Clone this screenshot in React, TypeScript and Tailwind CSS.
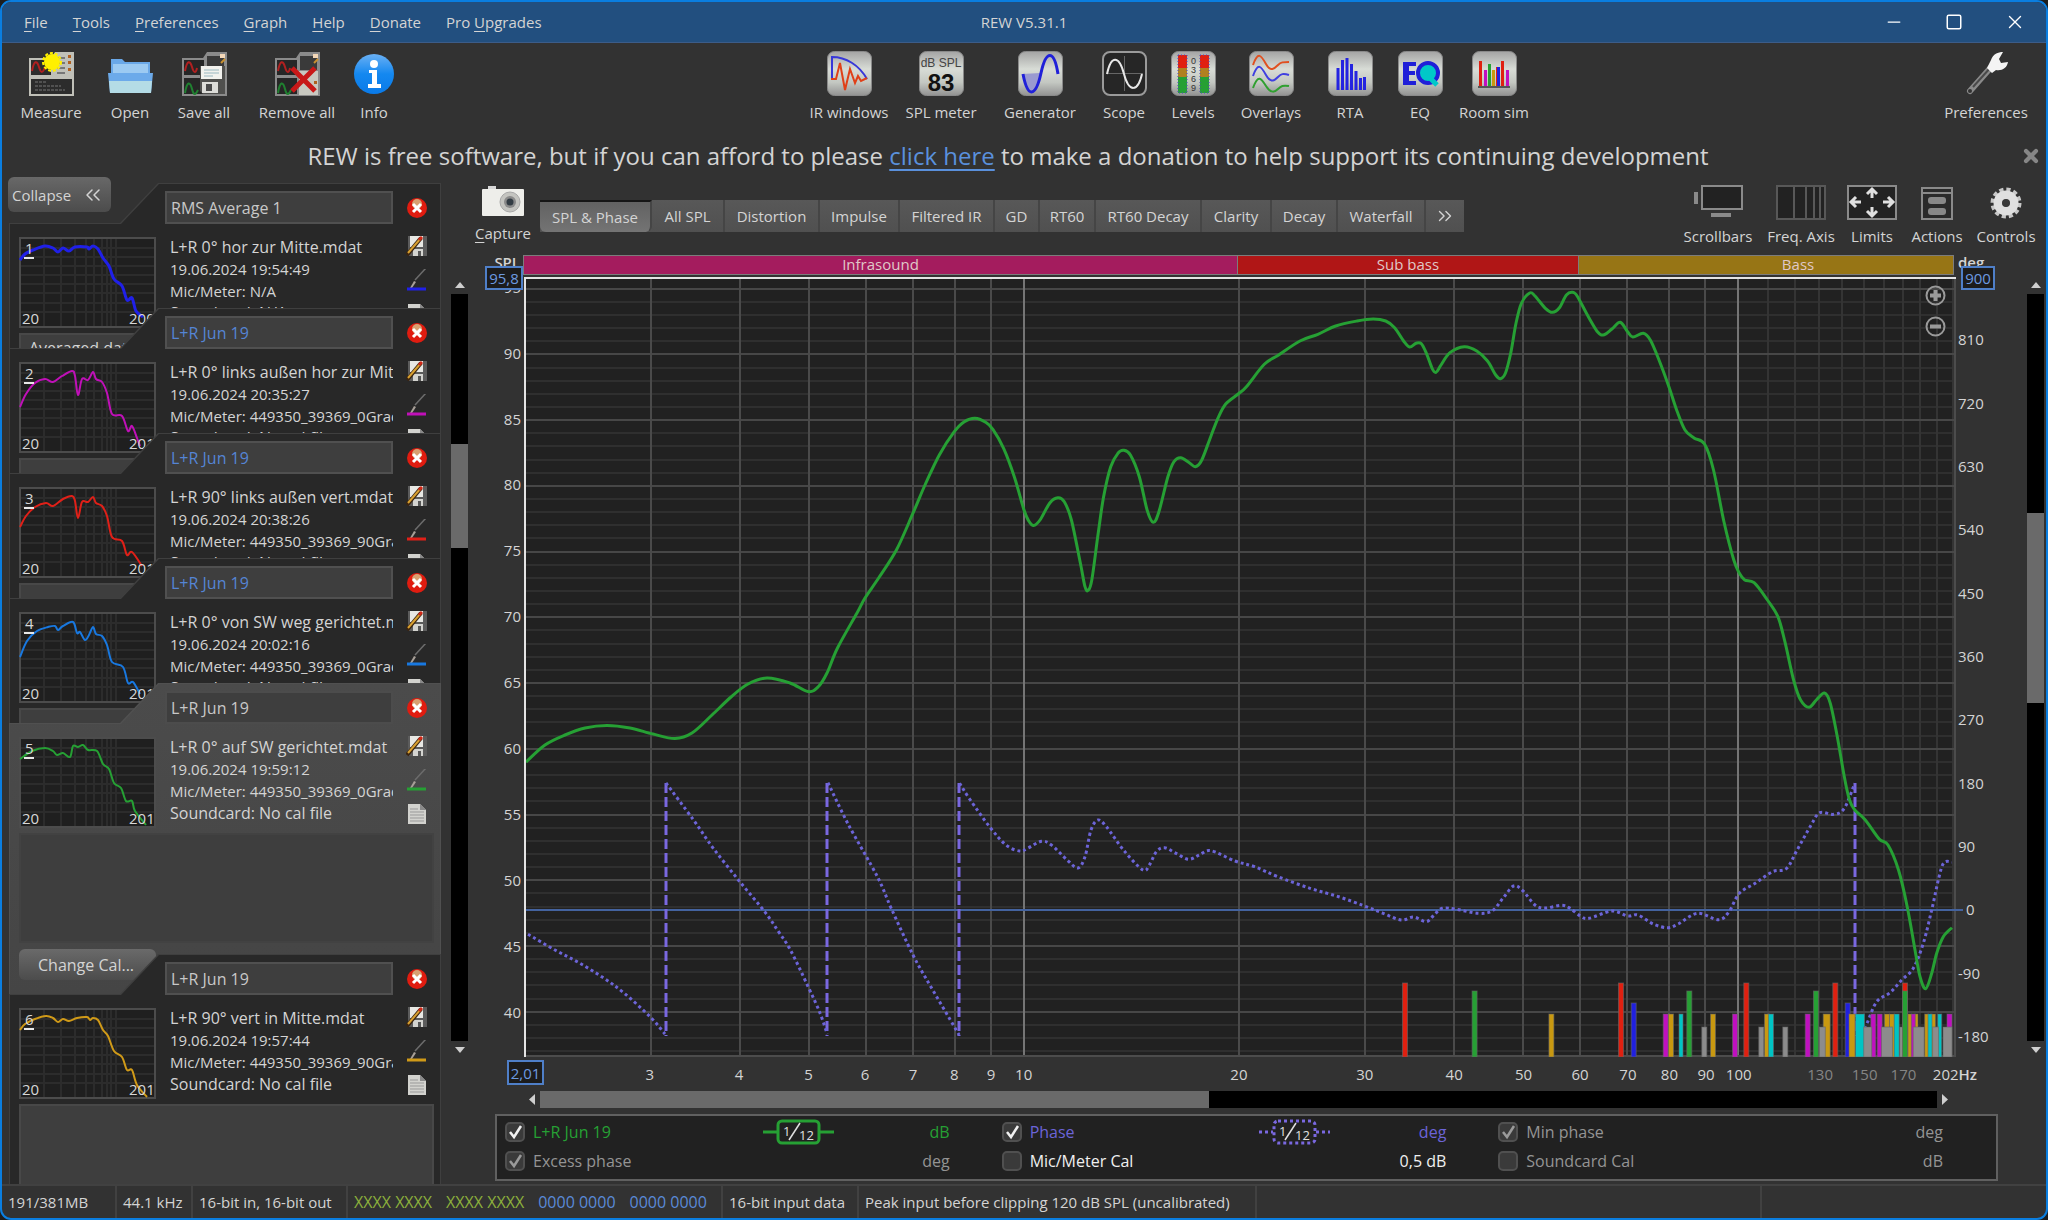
import type { ReactNode } from "react";
import { ChevronsLeft, ChevronsRight, Minus, Square, X } from "lucide-react";

type Point = [number, number];

/* ---------- curve helpers ---------- */

function smoothPath(points: Point[]) {
  let d = `M${points[0][0]} ${points[0][1]}`;
  for (let i = 0; i < points.length - 1; i++) {
    const p0 = points[Math.max(0, i - 1)];
    const p1 = points[i];
    const p2 = points[i + 1];
    const p3 = points[Math.min(points.length - 1, i + 2)];
    const c1 = [p1[0] + (p2[0] - p0[0]) / 6, p1[1] + (p2[1] - p0[1]) / 6];
    const c2 = [p2[0] - (p3[0] - p1[0]) / 6, p2[1] - (p3[1] - p1[1]) / 6];
    d += `C${c1[0].toFixed(1)} ${c1[1].toFixed(1)} ${c2[0].toFixed(1)} ${c2[1].toFixed(1)} ${p2[0]} ${p2[1]}`;
  }
  return d;
}

// Turns "x,y x,y ..." into points.
function parsePoints(text: string): Point[] {
  return text
    .trim()
    .split(/\s+/)
    .map((pair) => pair.split(",").map(Number) as Point);
}

/* ---------- plot geometry ---------- */

const PLOT = { left: 526, top: 279, width: 1430, height: 778 };
const BOTTOM = PLOT.top + PLOT.height;

const freqX = (hz: number) => 1024 + 714 * Math.log10(hz / 10);
const splY = (db: number) => 288.7 + (95 - db) * 13.145;
const degY = (deg: number) => 909.7 - deg * 0.702;
const pctX = (x: number) => `${((x - PLOT.left) / PLOT.width) * 100}%`;
const pctY = (y: number) => `${((y - PLOT.top) / PLOT.height) * 100}%`;

const splCurve = parsePoints(`
  526,762 545,745 565,735 585,728 607,725.5 630,728 653,734 675,738.5 692,733 712,715 731,697 748,684 767,678 790,683 808,691.5 818,687
  827,673 837.5,648 857,613 865,598 878.6,578 896.4,550 913.2,512.7 925,485 939.3,455 954.3,431.7 964.3,421.7
  975,418.3 985.7,422.3 992.9,429.3 1003.6,448.3 1014.3,476.7 1024,510 1028.6,520.7 1033.6,525.5 1040,520 1050,502.7
  1057.9,497.7 1064.3,501.7 1071.4,520 1080.4,563.3 1085,586.7 1088.2,590.3 1091.8,580 1098.2,533.3 1103.6,496.7
  1110.7,466.7 1117.9,453.3 1123.6,450.3 1130.4,455 1139.3,476.7 1147.1,510 1153.2,522.3 1158.9,511.7 1167.9,476.7
  1173.9,461.7 1180.7,457.7 1189.3,462.7 1195.4,466.7 1201.8,460 1210.7,436.7 1217.9,418.3 1225.7,404 1238.2,394
  1246.4,386.7 1264.3,364.3 1278.6,355 1300,341 1317.9,334.3 1335.7,326 1357.1,321 1373.2,319 1385.7,321
  1394.6,327.7 1403.6,341 1409.6,347 1416,343.3 1421.4,343.7 1426.8,354.3 1432.1,368.3 1436,372.3 1441,365
  1450,352.7 1464.3,346.7 1476.8,351 1487.5,361 1495.7,375 1500.4,378.7 1505.4,373.3 1510.7,353.3 1516,323.3
  1521.4,303.3 1529.7,293 1535,296 1545.4,308.3 1552.4,312.3 1559.4,307.7 1566.4,295 1572.7,292.3 1577.6,296.7
  1587.4,315 1597.9,332.3 1604.2,334.7 1611.9,329 1620.2,322.3 1627.6,331.7 1632.8,337 1643.3,333.3 1650.3,340
  1659,360 1669,387 1677,411 1685,430 1694,438 1704.5,444 1713.5,470 1724,522 1733.8,560 1739.4,573.3 1744.7,580
  1754.1,582.7 1767.4,600 1777.9,616.7 1784.9,641.7 1793.6,680 1800.6,700 1809,707.3 1816.3,700 1824.4,693
  1830.3,703.3 1837.3,736.7 1844.3,776.7 1849.5,800 1854.8,810 1865.3,820 1879.2,839 1888,845 1898.5,870
  1907.2,906.7 1915,950 1920,976.7 1925.7,988.7 1931.7,973.3 1936.7,953.3 1943.3,936.7 1952,927.7`);

const phaseCurves = [
  `528,934.3 555,950 578.9,962.7 602.6,977.3 624.3,993.3 650,1016.7 665,1034`,
  `666,783 693.5,820 713.3,848.3 739,880.7 764.7,911.7 778.5,931.7 790.4,950 807.8,986 820,1013 827.2,1034`,
  `828,782.7 847.7,823.3 877.4,876.7 891.2,908.3 913,955 930.8,986.7 959.2,1035`,
  `959.6,783.3 970.3,800 990,827.3 1006,845 1019.7,851 1027.6,848.3 1041.5,841.3 1051.4,845 1067.2,860 1078,868
   1085,856.7 1091,830 1098,820 1106.4,826.7 1124.3,851 1142.9,870 1149.3,865 1156.4,851.7 1164.6,847.7
   1176,853.3 1188.6,859.3 1199.3,855 1210.7,850.7 1235,861 1254.6,866.7 1277.9,876.7 1310,888.3 1338.6,896.7
   1363.6,905.7 1383.2,913.3 1401,920 1413.6,917 1426,921.7 1433.2,916 1442.1,908.3 1456.4,909.3 1477.9,913.3
   1492,911 1502.9,898.3 1513.6,886 1522.7,890.7 1535,905 1545.4,908 1561.2,905.3 1570,908.3 1580.4,916
   1589,918.3 1611.9,911 1627.6,916 1638,915 1653.8,924.3 1667.8,927.7 1678.3,924 1697.5,913.3 1718.5,919.7
   1729,911.7 1739.4,893.3 1755.2,883.3 1772.6,871.7 1786.6,868.3 1797.1,850 1811.1,825 1819.8,812.7
   1833.8,814.3 1844.3,808.3 1854.8,783.3`,
  `1862,1034 1867.3,1022.7 1876.7,1001.7 1890,992.7 1901.7,980 1913.3,968.3 1923.3,943.3 1931.7,910 1938.7,878.3
   1943.9,862.7 1952,862`,
].map(parsePoints);

const phaseWraps = [666, 827, 959, 1855];

// Room modes: kind, centre x, bar width
const modeKinds = {
  r: { color: "#e02010", height: 74 },
  g: { color: "#26a034", height: 66 },
  b: { color: "#2020e0", height: 54 },
  m: { color: "#c010c0", height: 43 },
  y: { color: "#c89810", height: 43 },
  c: { color: "#00c4c4", height: 43 },
  n: { color: "#8c8c8c", height: 30 },
};

const modes: [keyof typeof modeKinds, number, number][] = [
  ["r", 1405, 5], ["g", 1474.6, 5], ["y", 1551.4, 5], ["r", 1621, 5], ["b", 1633.7, 5], ["m", 1665.7, 5],
  ["y", 1671, 5], ["c", 1681, 4], ["g", 1689.3, 5], ["n", 1704.3, 5], ["y", 1713, 5], ["m", 1735, 5],
  ["r", 1746.3, 5], ["n", 1761.3, 5], ["y", 1767, 5], ["c", 1771, 5], ["n", 1785.3, 5], ["m", 1807.7, 5],
  ["g", 1816, 5], ["y", 1826.7, 7], ["n", 1822.3, 6], ["r", 1835.3, 5], ["b", 1847.7, 5], ["y", 1852, 6],
  ["c", 1860, 9], ["m", 1873.3, 5], ["n", 1867.7, 8], ["m", 1879.7, 5], ["y", 1887, 5], ["y", 1892, 5],
  ["n", 1887, 11], ["c", 1896.7, 5], ["n", 1901.7, 4], ["r", 1905, 5], ["g", 1905, 5], ["y", 1910, 4],
  ["y", 1916, 4], ["m", 1913.3, 4], ["n", 1918.7, 11], ["y", 1926.7, 4], ["y", 1933, 5], ["c", 1930, 4],
  ["c", 1939.7, 4], ["n", 1935.6, 6], ["m", 1949.5, 5], ["n", 1947.5, 9],
];

/* ---------- measurements ---------- */

interface Measurement {
  id: number;
  name: string;
  nameClass: string;
  file: string;
  date: string;
  mic: string;
  soundcard: string;
  notes: string;
  color: string;
  heightClass: string;
  endFreq: string;
  trace: string;
  lineWidth?: number;
  active?: boolean;
}

const measurements: Measurement[] = [
  {
    id: 1, name: "RMS Average 1", nameClass: "text-[#c8c8c8]", file: "L+R 0° hor zur Mitte.mdat",
    date: "19.06.2024 19:54:49", mic: "N/A", soundcard: "N/A", notes: "Averaged data", color: "#2020e8",
    heightClass: "h-[165px] -mb-10 shrink-0", endFreq: "200", lineWidth: 3,
    trace: "1,23 6,17 14,13 26,9 34,11 39,15 44,11 50,14 56,10 68,10 70,12 74,9 79,12 84,21 90,29 95,42 103,49 108,63 113,61 117,74 124,80",
  },
  {
    id: 2, name: "L+R Jun 19", nameClass: "text-[#5585d5]", file: "L+R 0° links außen hor zur Mitte.mdat",
    date: "19.06.2024 20:35:27", mic: "449350_39369_0Grad.txt", soundcard: "No cal file", notes: "", color: "#c010b8",
    heightClass: "h-[165px] -mb-10 shrink-0", endFreq: "201",
    trace: "1,45 7,32 16,21 26,17 34,20 43,14 53,9 56,14 59,33 63,17 69,18 74,10 77,17 83,20 88,31 93,52 103,54 109,69 113,64 118,76 121,84",
  },
  {
    id: 3, name: "L+R Jun 19", nameClass: "text-[#5585d5]", file: "L+R 90° links außen vert.mdat",
    date: "19.06.2024 20:38:26", mic: "449350_39369_90Grad.txt", soundcard: "No cal file", notes: "", color: "#e02018",
    heightClass: "h-[165px] -mb-10 shrink-0", endFreq: "201",
    trace: "1,40 7,29 16,20 27,16 34,19 44,12 53,9 56,14 59,31 63,15 69,15 74,10 77,16 83,19 88,29 93,50 103,54 108,68 113,65 123,79",
  },
  {
    id: 4, name: "L+R Jun 19", nameClass: "text-[#5585d5]", file: "L+R 0° von SW weg gerichtet.mdat",
    date: "19.06.2024 20:02:16", mic: "449350_39369_0Grad.txt", soundcard: "No cal file", notes: "", color: "#1878e0",
    heightClass: "h-[165px] -mb-10 shrink-0", endFreq: "201",
    trace: "1,45 8,29 18,19 29,15 36,14 39,18 44,14 54,10 58,21 61,20 66,28 70,23 74,15 77,22 83,24 88,33 93,50 104,55 109,71 114,70 121,82",
  },
  {
    id: 5, name: "L+R Jun 19", nameClass: "text-[#c8c8c8]", file: "L+R 0° auf SW gerichtet.mdat",
    date: "19.06.2024 19:59:12", mic: "449350_39369_0Grad.txt", soundcard: "No cal file", notes: "", color: "#26a034",
    heightClass: "h-[311px] -mb-10 shrink-0", endFreq: "201", active: true,
    trace: "1,22 13,14 26,11 34,14 38,18 44,16 51,20 54,9 59,10 64,8 69,13 78,14 84,27 90,32 95,46 102,51 107,64 113,64 116,74 127,88",
  },
  {
    id: 6, name: "L+R Jun 19", nameClass: "text-[#c8c8c8]", file: "L+R 90° vert in Mitte.mdat",
    date: "19.06.2024 19:57:44", mic: "449350_39369_90Grad.txt", soundcard: "No cal file", notes: "", color: "#d09a18",
    heightClass: "min-h-0 grow", endFreq: "201",
    trace: "1,22 6,16 16,11 27,8 34,10 39,14 44,11 50,13 58,10 68,9 71,12 74,10 79,12 84,22 89,28 95,43 103,49 108,62 113,62 118,77 128,89",
  },
];

/* ---------- icons ---------- */

function Svg({ size = 45, children }: { size?: number; children: ReactNode }) {
  return (
    <svg width={size} height={size} viewBox={`0 0 ${size} ${size}`} aria-hidden="true">
      {children}
    </svg>
  );
}

function SheetBase() {
  return (
    <>
      <path d="M0 7h21l4-6h20v44H0z" fill="#8b8b8b" />
      <path d="M2 9h20v15H2zM2 27h20v16H2z" fill="#262626" />
      <path d="M25 5h17v14H25z" fill="#3a3a3a" />
      <path d="M38 3h5v4h-5z" fill="#f4d8b8" />
      <path d="M39 12l4-4" stroke="#c89030" strokeWidth="2" />
      <path d="M3 20c2-11 5-11 7-4s4 6 5 1" fill="none" stroke="#b02020" strokeWidth="2" />
      <path d="M3 42c2-12 5-12 7-4s4 5 6 1" fill="none" stroke="#208030" strokeWidth="2" />
    </>
  );
}

function MeasureIcon() {
  return (
    <Svg>
      <path d="M0 7h22l4-6h19v44H0z" fill="#c0c0b8" />
      <path d="M2 9h20v15H2zM2 28h41v15H2z" fill="#2c2c2c" />
      <path d="M6 31h12M6 35h26M6 39h30" stroke="#777" strokeDasharray="3 1" />
      <path d="M3 20c2-11 5-11 7-4s4 6 6 0" fill="none" stroke="#b02020" strokeWidth="2" />
      <path d="M28 7h8M28 12h8M28 17h8M28 22h8" stroke="#777" strokeWidth="2" />
      <path d="M39 4h3v3h-3zM39 10h3v3h-3zM39 17h3v3h-3z" fill="#b06020" />
      <circle cx="23" cy="11" r="8" fill="#fff000" />
      <circle cx="23" cy="11" r="9" fill="none" stroke="#fff000" strokeWidth="2" strokeDasharray="3 2" />
    </Svg>
  );
}

function OpenIcon() {
  return (
    <Svg>
      <path d="M3 8h11l3 3h25v14H3z" fill="#6aa8e8" />
      <path d="M5 13h35v10H5z" fill="#9ccaf2" />
      <path d="M0 22h45l-2 20H2z" fill="#6caaea" />
      <path d="M1 30h43l-1 12H2z" fill="#b4dce6" />
    </Svg>
  );
}

function SaveAllIcon() {
  return (
    <Svg>
      <SheetBase />
      <path d="M18 15h25v28H21l-3-3z" fill="#50504e" />
      <path d="M19 15h21v13H19z" fill="#f2f2ee" />
      <path d="M22 19h15M22 22h15M22 25h9" stroke="#9ab8c0" />
      <path d="M20 31h16v11H20z" fill="#dcdcd8" />
      <path d="M24 33h6v7h-6z" fill="#4a4a4a" />
    </Svg>
  );
}

function RemoveAllIcon() {
  return (
    <Svg>
      <SheetBase />
      <path d="M24 20h19v24H24z" fill="#c8c8c0" />
      <path d="M39 30h3v3h-3z" fill="#b06020" />
      <path d="M17 17l23 23M40 17L17 40" stroke="#c81818" strokeWidth="5" />
    </Svg>
  );
}

function InfoIcon() {
  return (
    <Svg>
      <defs>
        <linearGradient id="info" x1="0" y1="0" x2="0" y2="1">
          <stop offset="0" stopColor="#6ab0f4" />
          <stop offset="0.5" stopColor="#1488f0" />
          <stop offset="1" stopColor="#0a7ae8" />
        </linearGradient>
      </defs>
      <circle cx="22" cy="23" r="20" fill="url(#info)" />
      <circle cx="22" cy="13" r="4" fill="#fff" />
      <path d="M17 19h8v14h4v4H16v-4h4V22h-3z" fill="#fff" />
    </Svg>
  );
}

function Metal({ children }: { children: ReactNode }) {
  return (
    <Svg>
      <rect x="0.5" y="0.5" width="44" height="44" rx="7" fill="url(#metal)" stroke="#8a8a8a" />
      {children}
    </Svg>
  );
}

const IrIcon = () => (
  <Metal>
    <path d="M5 28V6c14 0 27 8 35 22" fill="none" stroke="#3838d8" strokeWidth="2" />
    <path d="M4 28h5l4-16 5 27 5-21 5 14 3-7 3 5 6-3" fill="none" stroke="#e04018" strokeWidth="2" />
  </Metal>
);

const SplIcon = () => (
  <Metal>
    <text x="22" y="16" textAnchor="middle" fontSize="12" fill="#444" fontFamily="Liberation Sans, sans-serif">
      dB SPL
    </text>
    <text x="22" y="40" textAnchor="middle" fontSize="24" fontWeight="700" fill="#111" fontFamily="Liberation Sans, sans-serif">
      83
    </text>
  </Metal>
);

const GeneratorIcon = () => (
  <Metal>
    <path d="M5 23c5 26 13 23 17-1" fill="#9a9ad0" />
    <path d="M5 23c5 26 13 22 18-1S36-2 40 23" fill="none" stroke="#2020d8" strokeWidth="3" />
  </Metal>
);

const ScopeIcon = () => (
  <Svg>
    <rect x="1" y="1" width="43" height="43" rx="7" fill="#262626" stroke="#9a9a9a" strokeWidth="2" />
    <path d="M22.5 5v35M4 22.5h37" stroke="#666" />
    <path d="M5 23C9 4 17 4 22 23s14 18 18 0" fill="none" stroke="#e8e8e8" strokeWidth="2" />
  </Svg>
);

const LevelsIcon = () => (
  <Metal>
    {[7, 29].map((x) => (
      <g key={x}>
        <rect x={x} y="4" width="9" height="38" fill="#26a034" />
        <rect x={x} y="17" width="9" height="9" fill="#b08020" />
        <rect x={x} y="4" width="9" height="13" fill="#e02010" />
        <rect x={x} y="4" width="9" height="38" fill="none" stroke="#4848c0" strokeDasharray="1 2" />
      </g>
    ))}
    {["0", "3", "6", "9"].map((n, i) => (
      <text key={n} x="22.5" y={13 + i * 9} textAnchor="middle" fontSize="9" fill="#333" fontFamily="Liberation Sans, sans-serif">
        {n}
      </text>
    ))}
  </Metal>
);

const OverlaysIcon = () => (
  <Metal>
    <path d="M4 14c5-14 8-10 13-1s9 4 12 1 5-3 11-3" fill="none" stroke="#e05020" strokeWidth="2" />
    <path d="M4 25c5-14 8-10 13-1s9 5 12 2 5-4 11-2" fill="none" stroke="#4040e0" strokeWidth="2" />
    <path d="M4 37c5-14 8-10 13-2s9 6 12 3 5-4 11-3" fill="none" stroke="#30a030" strokeWidth="2" />
  </Metal>
);

const RtaIcon = () => (
  <Metal>
    <path
      d="M10 39V17M14.5 39V9M19 39V7M23.5 39V13M28 39V20M32.5 39V27M36.5 39V26"
      fill="none"
      stroke="#2424e0"
      strokeWidth="3"
    />
  </Metal>
);

const EqIcon = () => (
  <Metal>
    <path d="M5 11h13v4h-7v5h6v4h-6v6h7v4H5z" fill="#2020d8" />
    <circle cx="30" cy="22" r="10" fill="#00c8c8" stroke="#2020d8" strokeWidth="4" />
    <path d="M31 26l8 8" stroke="#00c8c8" strokeWidth="5" />
  </Metal>
);

const RoomSimIcon = () => (
  <Metal>
    <path d="M6 36h32" stroke="#555" strokeWidth="2" />
    {[
      [7, 10, "#e02010"], [12, 19, "#c010c0"], [16, 13, "#26a034"], [20, 19, "#c89810"],
      [24, 16, "#e02010"], [25, 16, "#2020e0"], [29, 10, "#e02010"], [34, 19, "#c010c0"],
    ].map(([x, y, color]) => (
      <rect key={x} x={x} y={y} width="3" height={35 - Number(y)} fill={String(color)} />
    ))}
  </Metal>
);

function WrenchIcon() {
  return (
    <Svg>
      <path d="M6 40L29 14" stroke="#8a8a8a" strokeWidth="6" strokeLinecap="round" />
      <path d="M9 36L27 16" stroke="#4a4a4a" strokeWidth="2" />
      <path d="M27 9c2-6 7-8 12-8l-4 7 2 4 7-1c-1 6-6 9-12 8l-4 3-5-5z" fill="#f4f4f4" />
      <circle cx="6" cy="40" r="2" fill="#323232" />
    </Svg>
  );
}

function CameraIcon() {
  return (
    <svg width="42" height="30" viewBox="0 0 42 30" aria-hidden="true">
      <path d="M6 0h8v3H6z" fill="#d8d8d8" />
      <rect y="3" width="42" height="27" rx="1" fill="#eeeeea" />
      <circle cx="28" cy="16" r="10" fill="#c4c4c0" stroke="#a8a8a8" />
      <circle cx="28" cy="16" r="6" fill="#8a8a8a" />
      <circle cx="28" cy="16" r="3.5" fill="#333c44" />
    </svg>
  );
}

function DeleteIcon() {
  return (
    <svg width="20" height="20" viewBox="0 0 20 20" aria-hidden="true">
      <circle cx="10" cy="10" r="10" fill="#e01c10" />
      <circle cx="10" cy="6" r="5" fill="#d8a070" />
      <path d="M6 6l8 8M14 6l-8 8" stroke="#fff" strokeWidth="3" />
    </svg>
  );
}

function SaveEditIcon() {
  return (
    <svg width="22" height="22" viewBox="0 0 22 22" aria-hidden="true">
      <path d="M2 1h19v20H2z" fill="#5c5c5c" />
      <path d="M4 1h13v11H4z" fill="#e8e8e4" />
      <path d="M7 14h10v7H7z" fill="#d4d4d0" />
      <path d="M12 16h3v5h-3z" fill="#555" />
      <path d="M1 20L15 3" stroke="#3a2410" strokeWidth="4" />
      <path d="M2 18L15 3" stroke="#d8a030" strokeWidth="2" />
      <path d="M13 5l3-3" stroke="#d02818" strokeWidth="3" />
    </svg>
  );
}

function BrushIcon({ color }: { color: string }) {
  return (
    <svg width="22" height="22" viewBox="0 0 22 22" aria-hidden="true">
      <path d="M9 11L20-1" stroke="#6c6c6c" strokeWidth="1.5" />
      <path d="M4 19l4-7 2 1-4 6z" fill="#a8a098" />
      <path d="M1 20h19" stroke={color} strokeWidth="3" />
    </svg>
  );
}

function NotesIcon() {
  return (
    <svg width="22" height="22" viewBox="0 0 22 22" aria-hidden="true">
      <path d="M2 1h12l6 6v14H2z" fill="#d2d2ce" />
      <path d="M14 1v6h6z" fill="#8a8a8a" />
      <path d="M4 6h8M4 9h14M4 12h14M4 15h14M4 18h14" stroke="#999" />
    </svg>
  );
}

/* ---------- small parts ---------- */

function Mnemonic({ text, at }: { text: string; at: number }) {
  return (
    <>
      {text.slice(0, at)}
      <span className="underline underline-offset-3">{text[at]}</span>
      {text.slice(at + 1)}
    </>
  );
}

function Arrow({ dir }: { dir: "up" | "down" | "left" | "right" }) {
  const shapes = { up: "M3 9l5-6 5 6z", down: "M3 6h10l-5 6z", left: "M10 2v11L4 7.5z", right: "M5 2l6 5.5L5 13z" };
  return (
    <svg width="15" height="15" viewBox="0 0 15 15" className="shrink-0" aria-hidden="true">
      <path d={shapes[dir]} fill="#cfcfcf" />
    </svg>
  );
}

function VerticalScrollbar({ parts, className }: { parts: [number, number, number]; className: string }) {
  return (
    <div className={`flex w-[17px] shrink-0 flex-col items-center ${className}`}>
      <Arrow dir="up" />
      <div className="flex w-full grow flex-col bg-black">
        <div style={{ flexGrow: parts[0] }} />
        <div className="bg-[#6a6a6a]" style={{ flexGrow: parts[1] }} />
        <div style={{ flexGrow: parts[2] }} />
      </div>
      <Arrow dir="down" />
    </div>
  );
}

function ToolButton({ label, width, icon }: { label: string; width: string; icon: ReactNode }) {
  return (
    <button className={`flex shrink-0 flex-col items-center gap-1 ${width}`}>
      {icon}
      <span className="leading-6 whitespace-nowrap">{label}</span>
    </button>
  );
}

/* ---------- left panel ---------- */

function Thumbnail({ m }: { m: Measurement }) {
  return (
    <svg width="137" height="91" viewBox="0 0 137 91" className="shrink-0" aria-label={`Trace ${m.id}`}>
      <rect x="1" y="1" width="135" height="89" fill="#1f1f1f" stroke="#4c4c4c" strokeWidth="2" />
      {[25, 42, 56, 67, 75, 83, 88, 92, 97].map((x) => (
        <path key={x} d={`M${x} 2v87`} stroke="#2c2c2c" strokeWidth="2" />
      ))}
      {[11, 20, 29, 38, 47, 56, 66, 75].map((y) => (
        <path key={y} d={`M2 ${y}h133`} stroke="#2c2c2c" strokeWidth="2" />
      ))}
      <path d={smoothPath(parsePoints(m.trace))} fill="none" stroke={m.color} strokeWidth={m.lineWidth ?? 2} />
      <g fontSize="15" fill="#d8d8d8">
        <text x="6" y="17">{m.id}</text>
        <text x="3" y="87">20</text>
        <text x="110" y="87">{m.endFreq}</text>
      </g>
      <path d="M5 21h10" stroke="#e8e8e8" strokeWidth="2" />
    </svg>
  );
}

function MeasurementCard({ m }: { m: Measurement }) {
  const frame = m.active ? "bg-[#505050]" : "bg-[#3f3f3f]";
  const body = m.active ? "bg-linear-to-b from-[#4b4b4b] to-[#454545]" : "bg-[#282828]";
  const field = m.active ? "border-[#4c4c4c]" : "border-[#505050]";
  const notes = m.active ? "border-[#424242]" : "border-[#484848]";
  return (
    <article
      className={`overflow-hidden px-px pt-px [clip-path:polygon(149px_0,100%_0,100%_100%,0_100%,0_40px,111px_40px)] ${m.heightClass} ${frame}`}
    >
      <div className={`h-full [clip-path:polygon(149px_0,100%_0,100%_100%,0_100%,0_40px,111px_40px)] ${body}`}>
        <div className="ml-[155px] flex items-center pt-[7px]">
          <input
            aria-label={`Name of measurement ${m.id}`}
            defaultValue={m.name}
            className={`h-[33px] w-[228px] border-2 bg-[#3e3e3e] px-1 text-base ${field} ${m.nameClass}`}
          />
          <button className="ml-[14px]" aria-label={`Delete measurement ${m.id}`}>
            <DeleteIcon />
          </button>
        </div>
        <div className="ml-[9px] flex pt-[13px]">
          <Thumbnail m={m} />
          <div className="-mt-px ml-[14px] h-[88px] w-[223px] overflow-hidden leading-[22px] whitespace-nowrap">
            <p className="text-base leading-[22px]">{m.file}</p>
            <p>{m.date}</p>
            <p>Mic/Meter: {m.mic}</p>
            <p className="text-base leading-[22px]">Soundcard: {m.soundcard}</p>
          </div>
          <div className="-mt-[2px] ml-[13px] flex flex-col gap-3">
            <button aria-label="Save"><SaveEditIcon /></button>
            <button aria-label="Trace colour"><BrushIcon color={m.color} /></button>
            <button aria-label="Notes"><NotesIcon /></button>
          </div>
        </div>
        <textarea
          aria-label={`Notes for measurement ${m.id}`}
          defaultValue={m.notes}
          className={`mt-[5px] ml-[9px] block h-[110px] w-[415px] resize-none border-2 bg-[#3e3e3e] px-2 pt-px text-base leading-6 ${notes}`}
        />
        <button className="mt-[6px] ml-[9px] h-[31px] w-[137px] rounded-md bg-linear-to-b from-[#6a6a6a] to-[#4c4c4c] pl-[19px] text-left text-base">
          Change Cal...
        </button>
      </div>
    </article>
  );
}

function MeasurementPanel() {
  return (
    <aside className="flex w-[439px] shrink-0 flex-col overflow-hidden">
      <button className="z-10 -mb-[29px] ml-[6px] flex h-[35px] w-[103px] shrink-0 items-center justify-between rounded-md bg-linear-to-b from-[#686868] to-[#4c4c4c] pt-px pr-[6px] pl-1">
        Collapse
        <ChevronsLeft size={24} strokeWidth={1.5} />
      </button>
      <div className="flex min-h-0 grow flex-col overflow-hidden pl-[7px]">
        {measurements.map((m) => (
          <MeasurementCard key={m.id} m={m} />
        ))}
      </div>
    </aside>
  );
}

/* ---------- graph ---------- */

const tabs: [string, string][] = [
  ["SPL & Phase", "w-[112px]"], ["All SPL", "w-[73px]"], ["Distortion", "w-[95px]"], ["Impulse", "w-[80px]"],
  ["Filtered IR", "w-[95px]"], ["GD", "w-[45px]"], ["RT60", "w-[56px]"], ["RT60 Decay", "w-[106px]"],
  ["Clarity", "w-[70px]"], ["Decay", "w-[66px]"], ["Waterfall", "w-[88px]"],
];

function GraphHeader() {
  return (
    <div className="flex h-[76px] shrink-0 items-start">
      <button className="mt-[9px] ml-[5px] flex w-[60px] flex-col items-center">
        <CameraIcon />
        <span className="mt-[5px] leading-6"><Mnemonic text="Capture" at={0} /></span>
      </button>
      <div className="mt-[23px] ml-[7px] flex h-[32px] bg-linear-to-b from-[#585858] to-[#505050]">
        {tabs.map(([label, width], i) => (
          <button
            key={label}
            className={`border-r-2 border-[#454545] whitespace-nowrap ${width} ${
              i === 0 ? "rounded-b-md border-t-2 border-t-[#161616] bg-linear-to-b from-[#626262] to-[#747474]" : ""
            }`}
          >
            {label}
          </button>
        ))}
        <button className="flex w-[38px] items-center justify-center" aria-label="More graphs">
          <ChevronsRight size={22} strokeWidth={1.5} />
        </button>
      </div>
      <div className="mt-[8px] mr-[11px] ml-auto flex">
        <GraphTool label="Scrollbars" width="w-[74px]">
          <path d="M9 1h40v23H9z" fill="#222" stroke="#8a8a8a" strokeWidth="2" />
          <path d="M1 7h4v12H1zM18 28h20v4H18z" fill="#8a8a8a" />
        </GraphTool>
        <GraphTool label="Freq. Axis" width="w-[92px]">
          <path d="M1 1h48v33H1zM18 1v33M30 1v33M38 1v33M44 1v33" fill="#222" stroke="#585858" strokeWidth="2" />
        </GraphTool>
        <GraphTool label="Limits" width="w-[50px]">
          <path d="M1 1h48v33H1z" fill="#222" stroke="#8a8a8a" strokeWidth="2" />
          <path
            d="M25 4v9M20 9l5-5 5 5M25 31v-9M20 26l5 5 5-5M4 17h10M9 12l-5 5 5 5M46 17H36M41 12l5 5-5 5"
            fill="none"
            stroke="#e0e0e0"
            strokeWidth="3"
          />
        </GraphTool>
        <GraphTool label="Actions" width="w-[80px]">
          <path d="M10 3h30v31H10zM10 8h30" fill="#2a2a2a" stroke="#8a8a8a" strokeWidth="2" />
          <rect x="16" y="12" width="18" height="7" rx="3" fill="#888" />
          <rect x="16" y="23" width="18" height="7" rx="3" fill="#888" />
        </GraphTool>
        <GraphTool label="Controls" width="w-[58px]">
          <circle cx="25" cy="18" r="13" fill="none" stroke="#c8c8c8" strokeWidth="5" strokeDasharray="4 2.8" />
          <circle cx="25" cy="18" r="8" fill="none" stroke="#e0e0e0" strokeWidth="9" />
          <circle cx="25" cy="18" r="4" fill="#3a3a3a" />
        </GraphTool>
      </div>
    </div>
  );
}

function GraphTool({ label, width, children }: { label: string; width: string; children: ReactNode }) {
  return (
    <button className={`flex flex-col items-center gap-1 ${width}`}>
      <svg width="50" height="35" viewBox="0 0 50 35" aria-hidden="true">
        {children}
      </svg>
      <span className="leading-6 whitespace-nowrap">{label}</span>
    </button>
  );
}

function Plot() {
  const majorFreqs = [3, 4, 5, 6, 7, 8, 9, 20, 30, 40, 50, 60, 70, 80, 90];
  const minorFreqs = [110, 120, 130, 140, 150, 160, 170, 180, 190, 200];
  const levels = Array.from({ length: 59 }, (_, i) => 95 - i);
  return (
    <svg
      viewBox={`${PLOT.left} ${PLOT.top} ${PLOT.width} ${PLOT.height}`}
      preserveAspectRatio="none"
      className="absolute inset-0 h-full w-full"
      role="img"
      aria-label="SPL and phase against frequency"
    >
      {levels.map((db) => (
        <path key={db} d={`M${PLOT.left} ${Math.round(splY(db))}H${PLOT.left + PLOT.width}`} stroke="#2f2f2f" strokeWidth="2" />
      ))}
      {minorFreqs.map((hz) => (
        <path key={hz} d={`M${Math.round(freqX(hz))} ${PLOT.top}V${BOTTOM}`} stroke="#343434" strokeWidth="2" />
      ))}
      {levels.filter((db) => db % 5 === 0).map((db) => (
        <path key={db} d={`M${PLOT.left} ${Math.round(splY(db))}H${PLOT.left + PLOT.width}`} stroke="#474747" strokeWidth="2" />
      ))}
      {majorFreqs.map((hz) => (
        <path key={hz} d={`M${Math.round(freqX(hz))} ${PLOT.top}V${BOTTOM}`} stroke="#4a4a4a" strokeWidth="2" />
      ))}
      {[10, 100].map((hz) => (
        <path key={hz} d={`M${freqX(hz)} ${PLOT.top}V${BOTTOM}`} stroke="#757575" strokeWidth="2" />
      ))}
      <path d={`M1955 ${PLOT.top}V${BOTTOM}M${PLOT.left} ${BOTTOM - 1}H1956`} stroke="#4c4c4c" strokeWidth="2" />
      <path d={`M${PLOT.left} 910H1956`} stroke="#44639f" strokeWidth="2" />
      {phaseWraps.map((x) => (
        <path key={x} d={`M${x} 783V1036`} stroke="#7a68e0" strokeWidth="3" strokeDasharray="10 4" />
      ))}
      {phaseCurves.map((points, i) => (
        <path key={i} d={smoothPath(points)} fill="none" stroke="#6c64d8" strokeWidth="3" strokeDasharray="3 3" />
      ))}
      <path d={smoothPath(splCurve)} fill="none" stroke="#26a034" strokeWidth="3" />
      {modes.map(([kind, x, width], i) => (
        <rect
          key={i}
          x={x - width / 2}
          y={BOTTOM - modeKinds[kind].height}
          width={width}
          height={modeKinds[kind].height}
          fill={modeKinds[kind].color}
          stroke="#666"
          strokeOpacity="0.6"
        />
      ))}
    </svg>
  );
}

function ZoomButton({ sign }: { sign: "in" | "out" }) {
  return (
    <button className="block" aria-label={`Zoom ${sign}`}>
      <svg width="21" height="21" viewBox="0 0 21 21" aria-hidden="true">
        <circle cx="10.5" cy="10.5" r="9" fill="none" stroke="#9a9a9a" strokeWidth="2" />
        <path d={sign === "in" ? "M5 10.5h11M10.5 5v11" : "M5 10.5h11"} stroke="#9a9a9a" strokeWidth="4" />
      </svg>
    </button>
  );
}

const freqLabels = [3, 4, 5, 6, 7, 8, 9, 10, 20, 30, 40, 50, 60, 70, 80, 90, 100, 130, 150, 170];
const splLabels = [95, 90, 85, 80, 75, 70, 65, 60, 55, 50, 45, 40];
const degLabels = [810, 720, 630, 540, 450, 360, 270, 180, 90, 0, -90, -180];

function Graph() {
  return (
    <div className="flex min-w-0 grow flex-col">
      <div className="grid min-h-0 grow grid-cols-[56px_1fr_71px] grid-rows-[24px_1fr_34px]">
        <span className="pr-[4px] text-right leading-[18px] font-semibold">SPL</span>
        <div className="mt-[2px] -ml-px mr-[2px] flex h-[20px] border border-[#7c7c7c] text-center leading-4 text-[#e0c8c8]">
          <div className="basis-0 bg-[#a41c5e]" style={{ flexGrow: 715 }}>Infrasound</div>
          <div className="basis-0 border-x border-[#7c7c7c] bg-[#b01616]" style={{ flexGrow: 341 }}>Sub bass</div>
          <div className="basis-0 bg-[#977515]" style={{ flexGrow: 375 }}>
            <span className="pl-16">Bass</span>
          </div>
        </div>
        <span className="pl-[2px] leading-[18px] font-semibold">deg</span>

        <div className="relative">
          {splLabels.map((db) => (
            <span key={db} className="absolute right-[3px] -translate-y-1/2 leading-5" style={{ top: pctY(splY(db)) }}>
              {db}
            </span>
          ))}
          <input
            aria-label="Top SPL limit"
            defaultValue="95,8"
            className="absolute -top-[11px] right-[1px] h-[24px] w-[38px] border-2 border-[#4f7fc8] bg-[#1c1c1c] text-center text-[#6c9ae0]"
          />
        </div>
        <div className="relative border-t-2 border-l-2 border-[#e4e4e4] bg-[#212121]">
          <Plot />
          <div className="absolute top-[6px] right-[10px] flex flex-col gap-[10px]">
            <ZoomButton sign="in" />
            <ZoomButton sign="out" />
          </div>
        </div>
        <div className="relative">
          {degLabels.map((deg) => (
            <span
              key={deg}
              className={`absolute -translate-y-1/2 leading-5 ${deg === 0 ? "left-[10px]" : "left-[2px]"}`}
              style={{ top: pctY(degY(deg)) }}
            >
              {deg}
            </span>
          ))}
          <span className="absolute left-0 h-[2px] w-[7px] bg-[#44639f]" style={{ top: pctY(909.7) }} />
          <input
            aria-label="Top phase limit"
            defaultValue="900"
            className="absolute -top-[11px] left-[5px] h-[24px] w-[34px] border-2 border-[#4f7fc8] bg-[#1c1c1c] text-center text-[#6c9ae0]"
          />
        </div>

        <span />
        <div className="relative">
          <input
            aria-label="Start frequency"
            defaultValue="2,01"
            className="absolute top-[3px] -left-[17px] h-[25px] w-[37px] border-2 border-[#4f7fc8] bg-[#1c1c1c] text-center text-[#6c9ae0]"
          />
          {freqLabels.map((hz) => (
            <span
              key={hz}
              className={`absolute top-[7px] -translate-x-1/2 leading-5 ${hz > 100 ? "text-[#858585]" : ""}`}
              style={{ left: pctX(freqX(hz) + 1) }}
            >
              {hz}
            </span>
          ))}
          <span className="absolute top-[7px] -right-[21px] leading-5">
            202<span className="font-semibold">Hz</span>
          </span>
        </div>
        <span />
      </div>

      <div className="mr-[75px] ml-[57px] flex h-[17px] shrink-0 items-center">
        <Arrow dir="left" />
        <div className="flex h-full grow bg-black">
          <div className="bg-[#6a6a6a]" style={{ flexGrow: 669 }} />
          <div style={{ flexGrow: 728 }} />
        </div>
        <Arrow dir="right" />
      </div>
      <Legend />
    </div>
  );
}

/* ---------- legend ---------- */

interface TraceOption {
  label: string;
  unit: string;
  checked: boolean;
  disabled?: boolean;
  textClass: string;
  badge?: { color: string; dotted: boolean };
}

const traceOptions: TraceOption[] = [
  { label: "L+R Jun 19", unit: "dB", checked: true, textClass: "text-[#26a034]", badge: { color: "#26a034", dotted: false } },
  { label: "Phase", unit: "deg", checked: true, textClass: "text-[#6c64d8]", badge: { color: "#7a68e0", dotted: true } },
  { label: "Min phase", unit: "deg", checked: true, disabled: true, textClass: "text-[#949494]" },
  { label: "Excess phase", unit: "deg", checked: true, disabled: true, textClass: "text-[#949494]" },
  { label: "Mic/Meter Cal", unit: "0,5 dB", checked: false, textClass: "text-[#f0f0f0]" },
  { label: "Soundcard Cal", unit: "dB", checked: false, disabled: true, textClass: "text-[#949494]" },
];

function SmoothingBadge({ color, dotted }: { color: string; dotted: boolean }) {
  return (
    <svg width="71" height="27" viewBox="0 0 71 27" aria-label="1/12 octave smoothing">
      <g fill="none" stroke={color} strokeWidth="3" strokeDasharray={dotted ? "3 3" : undefined}>
        <path d="M0 14h14M57 14h14" />
        <rect x="15" y="3" width="41" height="22" rx="4" />
      </g>
      <text x="20" y="18" fontSize="13" fill="#e0e0e0">1</text>
      <path d="M26 22L37 5" stroke="#e0e0e0" strokeWidth="1.5" />
      <text x="36" y="22" fontSize="13" fill="#e0e0e0">12</text>
    </svg>
  );
}

function Legend() {
  return (
    <div className="mt-[6px] mr-[29px] mb-[3px] ml-[27px] grid h-[67px] shrink-0 grid-cols-3 grid-rows-2 border-2 border-[#606060] bg-[#212121] pt-px pr-[2px] pb-1 pl-[7px]">
      {traceOptions.map((option) => (
        <div key={option.label} className={`flex items-center pr-[51px] pl-px text-base ${option.textClass}`}>
          <label className="flex grow items-center gap-2">
            <span className="relative size-5">
              <input
                type="checkbox"
                defaultChecked={option.checked}
                disabled={option.disabled}
                className="peer block size-5 appearance-none rounded-[5px] border-2 border-[#505050] bg-[#3a3a3a]"
              />
              <svg
                viewBox="0 0 20 20"
                className="pointer-events-none absolute inset-0 hidden peer-checked:block"
                aria-hidden="true"
              >
                <path d="M5 10l4 5 7-11" fill="none" stroke={option.disabled ? "#9a9a9a" : "#f0f0f0"} strokeWidth="2.5" />
              </svg>
            </span>
            {option.label}
          </label>
          {option.badge && <SmoothingBadge {...option.badge} />}
          <span className="w-[116px] text-right">{option.unit}</span>
        </div>
      ))}
    </div>
  );
}

/* ---------- window ---------- */

const menus: [string, number][] = [
  ["File", 0], ["Tools", 0], ["Preferences", 0], ["Graph", 0], ["Help", 0], ["Donate", 0], ["Pro Upgrades", 4],
];

function TitleBar() {
  return (
    <header className="relative flex h-[41px] shrink-0 items-center border-b border-[#3c5c88] bg-[#224f7f]">
      <nav className="flex gap-[25px] pl-[22px]">
        {menus.map(([label, at]) => (
          <button key={label}><Mnemonic text={label} at={at} /></button>
        ))}
      </nav>
      <h1 className="pointer-events-none absolute inset-x-0 text-center">REW V5.31.1</h1>
      <div className="relative ml-auto flex items-center gap-[41px] pr-[20px] text-white">
        <button aria-label="Minimise"><Minus size={20} strokeWidth={1.5} /></button>
        <button aria-label="Maximise"><Square size={18} strokeWidth={2} /></button>
        <button aria-label="Close"><X size={22} strokeWidth={1.5} /></button>
      </div>
    </header>
  );
}

function Toolbar() {
  return (
    <div className="flex h-[85px] shrink-0 justify-between pt-[8px] pr-[15px] pl-[8px]">
      <div className="flex pr-[5px]">
        <ToolButton label="Measure" width="w-[82px]" icon={<MeasureIcon />} />
        <ToolButton label="Open" width="w-[76px]" icon={<OpenIcon />} />
        <ToolButton label="Save all" width="w-[72px]" icon={<SaveAllIcon />} />
        <ToolButton label="Remove all" width="w-[114px]" icon={<RemoveAllIcon />} />
        <ToolButton label="Info" width="w-[40px]" icon={<InfoIcon />} />
      </div>
      <div className="flex">
        <ToolButton label="IR windows" width="w-[88px]" icon={<IrIcon />} />
        <ToolButton label="SPL meter" width="w-[96px]" icon={<SplIcon />} />
        <ToolButton label="Generator" width="w-[102px]" icon={<GeneratorIcon />} />
        <ToolButton label="Scope" width="w-[66px]" icon={<ScopeIcon />} />
        <ToolButton label="Levels" width="w-[72px]" icon={<LevelsIcon />} />
        <ToolButton label="Overlays" width="w-[84px]" icon={<OverlaysIcon />} />
        <ToolButton label="RTA" width="w-[74px]" icon={<RtaIcon />} />
        <ToolButton label="EQ" width="w-[66px]" icon={<EqIcon />} />
        <ToolButton label="Room sim" width="w-[82px]" icon={<RoomSimIcon />} />
      </div>
      <ToolButton label="Preferences" width="w-[90px]" icon={<WrenchIcon />} />
    </div>
  );
}

function StatusBar() {
  const cell = "flex items-center border-r-2 border-[#414141] pl-[6px] whitespace-nowrap";
  return (
    <footer className="flex h-[34px] shrink-0 border-t-2 border-[#414141]">
      <div className={`w-[115px] ${cell}`}>191/381MB</div>
      <div className={`w-[76px] ${cell}`}>44.1 kHz</div>
      <div className={`w-[155px] ${cell}`}>16-bit in, 16-bit out</div>
      <div className={`w-[375px] gap-[14px] text-base ${cell}`}>
        <span className="flex gap-[14px] text-[#8cb03c]">
          <span>XXXX XXXX</span>
          <span>XXXX XXXX</span>
        </span>
        <span className="flex gap-[14px] text-[#5a8ad8]">
          <span>0000 0000</span>
          <span>0000 0000</span>
        </span>
      </div>
      <div className={`w-[136px] ${cell}`}>16-bit input data</div>
      <div className={`w-[398px] ${cell}`}>Peak input before clipping 120 dB SPL (uncalibrated)</div>
      <div className={`w-[505px] ${cell}`} />
    </footer>
  );
}

export default function App() {
  return (
    <div className="h-screen bg-[#1e1e1e]">
      <svg width="0" height="0" className="absolute" aria-hidden="true">
        <linearGradient id="metal" x1="0" y1="0" x2="0" y2="1">
          <stop offset="0" stopColor="#a4a4a4" />
          <stop offset="0.4" stopColor="#d8dcd6" />
          <stop offset="0.7" stopColor="#c4c8c2" />
          <stop offset="1" stopColor="#929292" />
        </linearGradient>
      </svg>
      <div className="flex h-full flex-col overflow-hidden rounded-[11px] border-2 border-[#0a7ee0] bg-[#323232] font-['Open_Sans','Noto_Sans',sans-serif] text-[15px] text-[#d4d4d4]">
        <TitleBar />
        <Toolbar />
        <div className="relative flex h-[49px] shrink-0 items-center justify-center pt-[6px] pr-[32px] text-[24px]">
          <p className="whitespace-nowrap">
            REW is free software, but if you can afford to please{" "}
            <a href="#donate" className="text-[#5a90dc] underline underline-offset-4">click here</a> to make a donation to
            help support its continuing development
          </p>
          <button className="absolute right-[5px] text-[#868686]" aria-label="Dismiss">
            <X size={20} strokeWidth={5} />
          </button>
        </div>
        <main className="flex min-h-0 grow">
          <MeasurementPanel />
          <VerticalScrollbar parts={[150, 104, 493]} className="ml-[10px] pt-[102px] pb-[128px]" />
          <div className="flex min-w-0 grow flex-col">
            <GraphHeader />
            <div className="flex min-h-0 grow">
              <Graph />
              <VerticalScrollbar parts={[219, 190, 338]} className="mr-[2px] pt-[26px] pb-[128px]" />
            </div>
          </div>
        </main>
        <StatusBar />
      </div>
    </div>
  );
}
